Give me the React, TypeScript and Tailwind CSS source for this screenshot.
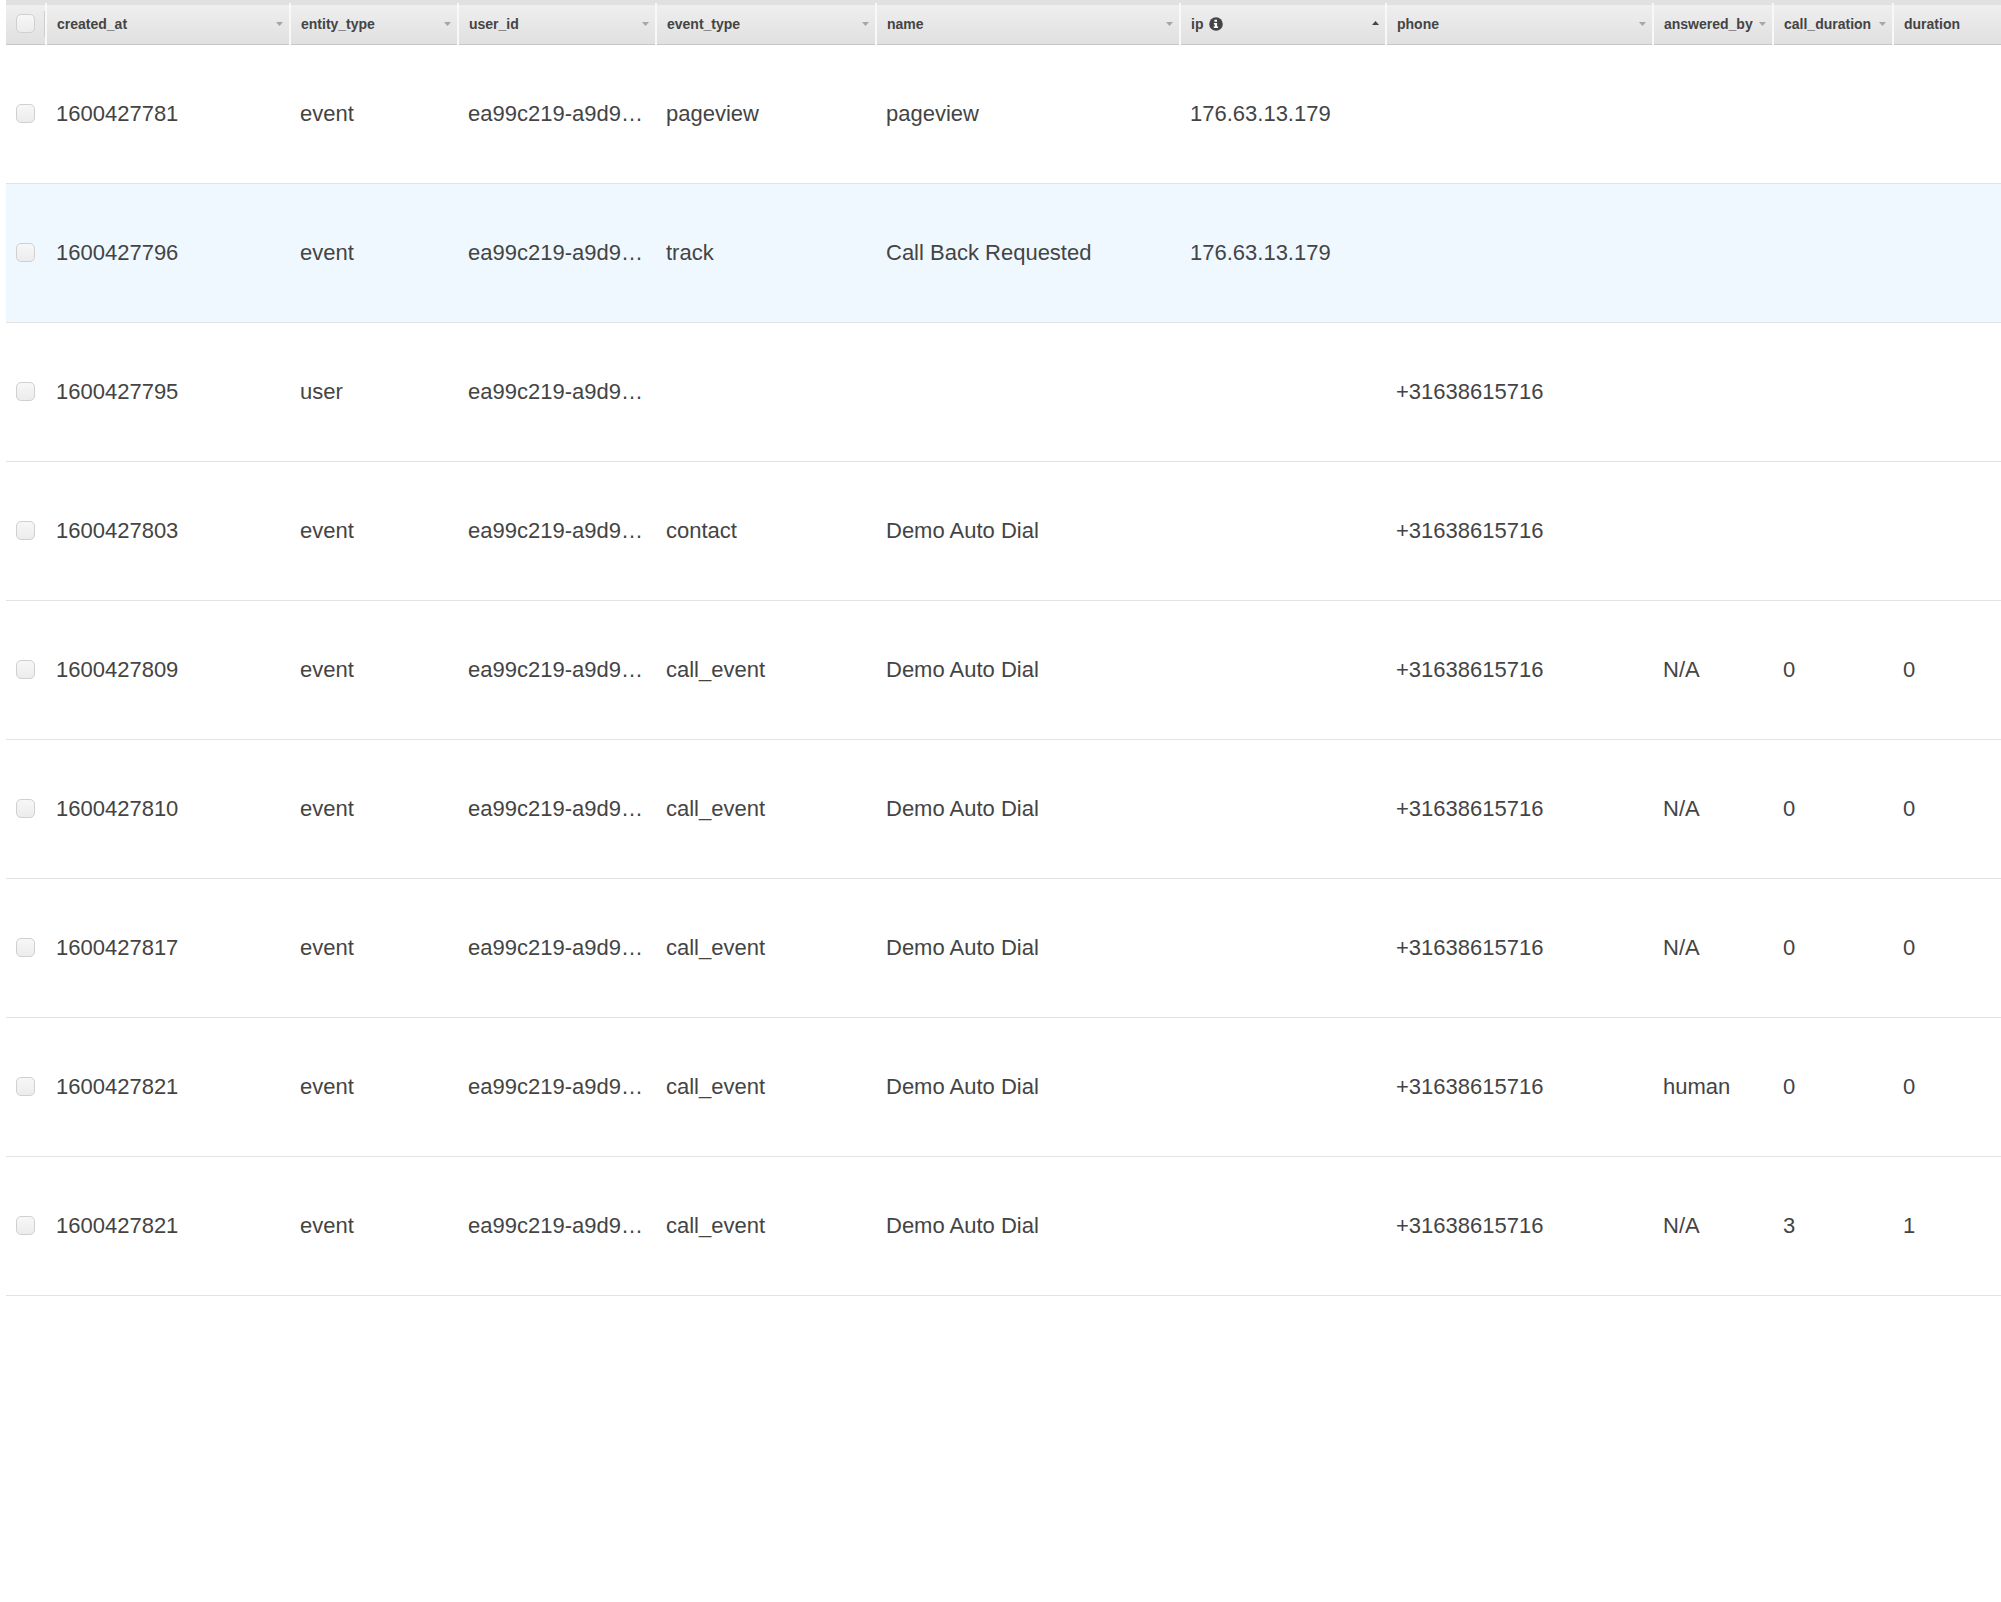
const columns = [
  { key: "created_at", width: 244, caret: "down" },
  { key: "entity_type", width: 168, caret: "down" },
  { key: "user_id", width: 198, caret: "down" },
  { key: "event_type", width: 220, caret: "down" },
  { key: "name", width: 304, caret: "down" },
  { key: "ip", width: 206, caret: "up", info: true },
  { key: "phone", width: 267, caret: "down" },
  { key: "answered_by", width: 120, caret: "down" },
  { key: "call_duration", width: 120, caret: "down" },
  { key: "duration", width: 108 },
];

const uid = "ea99c219-a9d9…";

// created_at, entity_type, user_id, event_type, name, ip, phone, answered_by, call_duration, duration
const rows = [
  ["1600427781", "event", uid, "pageview", "pageview", "176.63.13.179", "", "", "", ""],
  ["1600427796", "event", uid, "track", "Call Back Requested", "176.63.13.179", "", "", "", ""],
  ["1600427795", "user", uid, "", "", "", "+31638615716", "", "", ""],
  ["1600427803", "event", uid, "contact", "Demo Auto Dial", "", "+31638615716", "", "", ""],
  ["1600427809", "event", uid, "call_event", "Demo Auto Dial", "", "+31638615716", "N/A", "0", "0"],
  ["1600427810", "event", uid, "call_event", "Demo Auto Dial", "", "+31638615716", "N/A", "0", "0"],
  ["1600427817", "event", uid, "call_event", "Demo Auto Dial", "", "+31638615716", "N/A", "0", "0"],
  ["1600427821", "event", uid, "call_event", "Demo Auto Dial", "", "+31638615716", "human", "0", "0"],
  ["1600427821", "event", uid, "call_event", "Demo Auto Dial", "", "+31638615716", "N/A", "3", "1"],
];

function Checkbox() {
  return (
    <span className="block h-[19px] w-[19px] rounded-[5px] border border-[#d0d0d0] bg-gradient-to-b from-[#f7f7f7] to-[#ececec]" />
  );
}

function Caret({ dir }: { dir: string }) {
  return (
    <svg width="7" height="4" viewBox="0 0 7 4" className={dir === "up" ? "mb-[2px] shrink-0" : "mt-[1px] shrink-0"}>
      {dir === "up" ? (
        <path d="M0 4 L3.5 0 L7 4 Z" fill="#444444" />
      ) : (
        <path d="M0 0 L7 0 L3.5 4 Z" fill="#a6a6a6" />
      )}
    </svg>
  );
}

function InfoIcon() {
  return (
    <svg width="14" height="14" viewBox="0 0 14 14" className="ml-[6px] shrink-0">
      <circle cx="7" cy="7" r="6.8" fill="#444444" />
      <path d="M5.4 2.8h2.6v2h-2.6z M4.9 6h3.2v3.6h1v1.4h-4.4v-1.4h1v-2.2h-0.8z" fill="#ffffff" />
    </svg>
  );
}

export default function App() {
  return (
    <div className="min-h-[1602px] bg-white pl-[6px] font-['Liberation_Sans',Arial,sans-serif] text-[#444444]">
      <table className="w-[1995px] table-fixed border-collapse">
        <colgroup>
          <col className="w-[40px]" />
          {columns.map((c) => (
            <col key={c.key} style={{ width: c.width }} />
          ))}
        </colgroup>
        <thead>
          <tr className="h-[43px] border-t-[3px] border-b border-t-[#e1e1e1] border-b-[#c6c6c6] bg-gradient-to-b from-[#efefef] to-[#e0e0e0]">
            <th className="border-t border-t-white p-0 pl-[10px] text-left">
              {/* checkbox plus the short divider beside it */}
              <div className="flex items-end justify-between">
                <span className="mb-[4px]">
                  <Checkbox />
                </span>
                <span className="h-[26px] w-px bg-[#cfcfcf]" />
              </div>
            </th>
            {columns.map((c) => (
              <th
                key={c.key}
                className="border-t border-l-2 border-t-white border-l-[#f8f8f8] p-0 pl-[10px] pr-[6px] text-left"
              >
                <div className="flex items-center justify-between">
                  <span className="flex items-center text-[14px] font-bold leading-[20px]">
                    {c.key}
                    {c.info && <InfoIcon />}
                  </span>
                  {c.caret && <Caret dir={c.caret} />}
                </div>
              </th>
            ))}
          </tr>
        </thead>
        <tbody>
          {rows.map((row, i) => (
            <tr
              key={i}
              className={`h-[139px] border-b border-b-[#e2e2e2] ${i === 1 ? "bg-[#f0f8ff]" : "bg-white"}`}
            >
              <td className="p-0 pb-[2px] pl-[10px]">
                <Checkbox />
              </td>
              {row.map((cell, j) => (
                <td key={j} className="overflow-hidden whitespace-nowrap p-0 pl-[10px] text-[22px] leading-[28px]">
                  {cell}
                </td>
              ))}
            </tr>
          ))}
        </tbody>
      </table>
    </div>
  );
}
